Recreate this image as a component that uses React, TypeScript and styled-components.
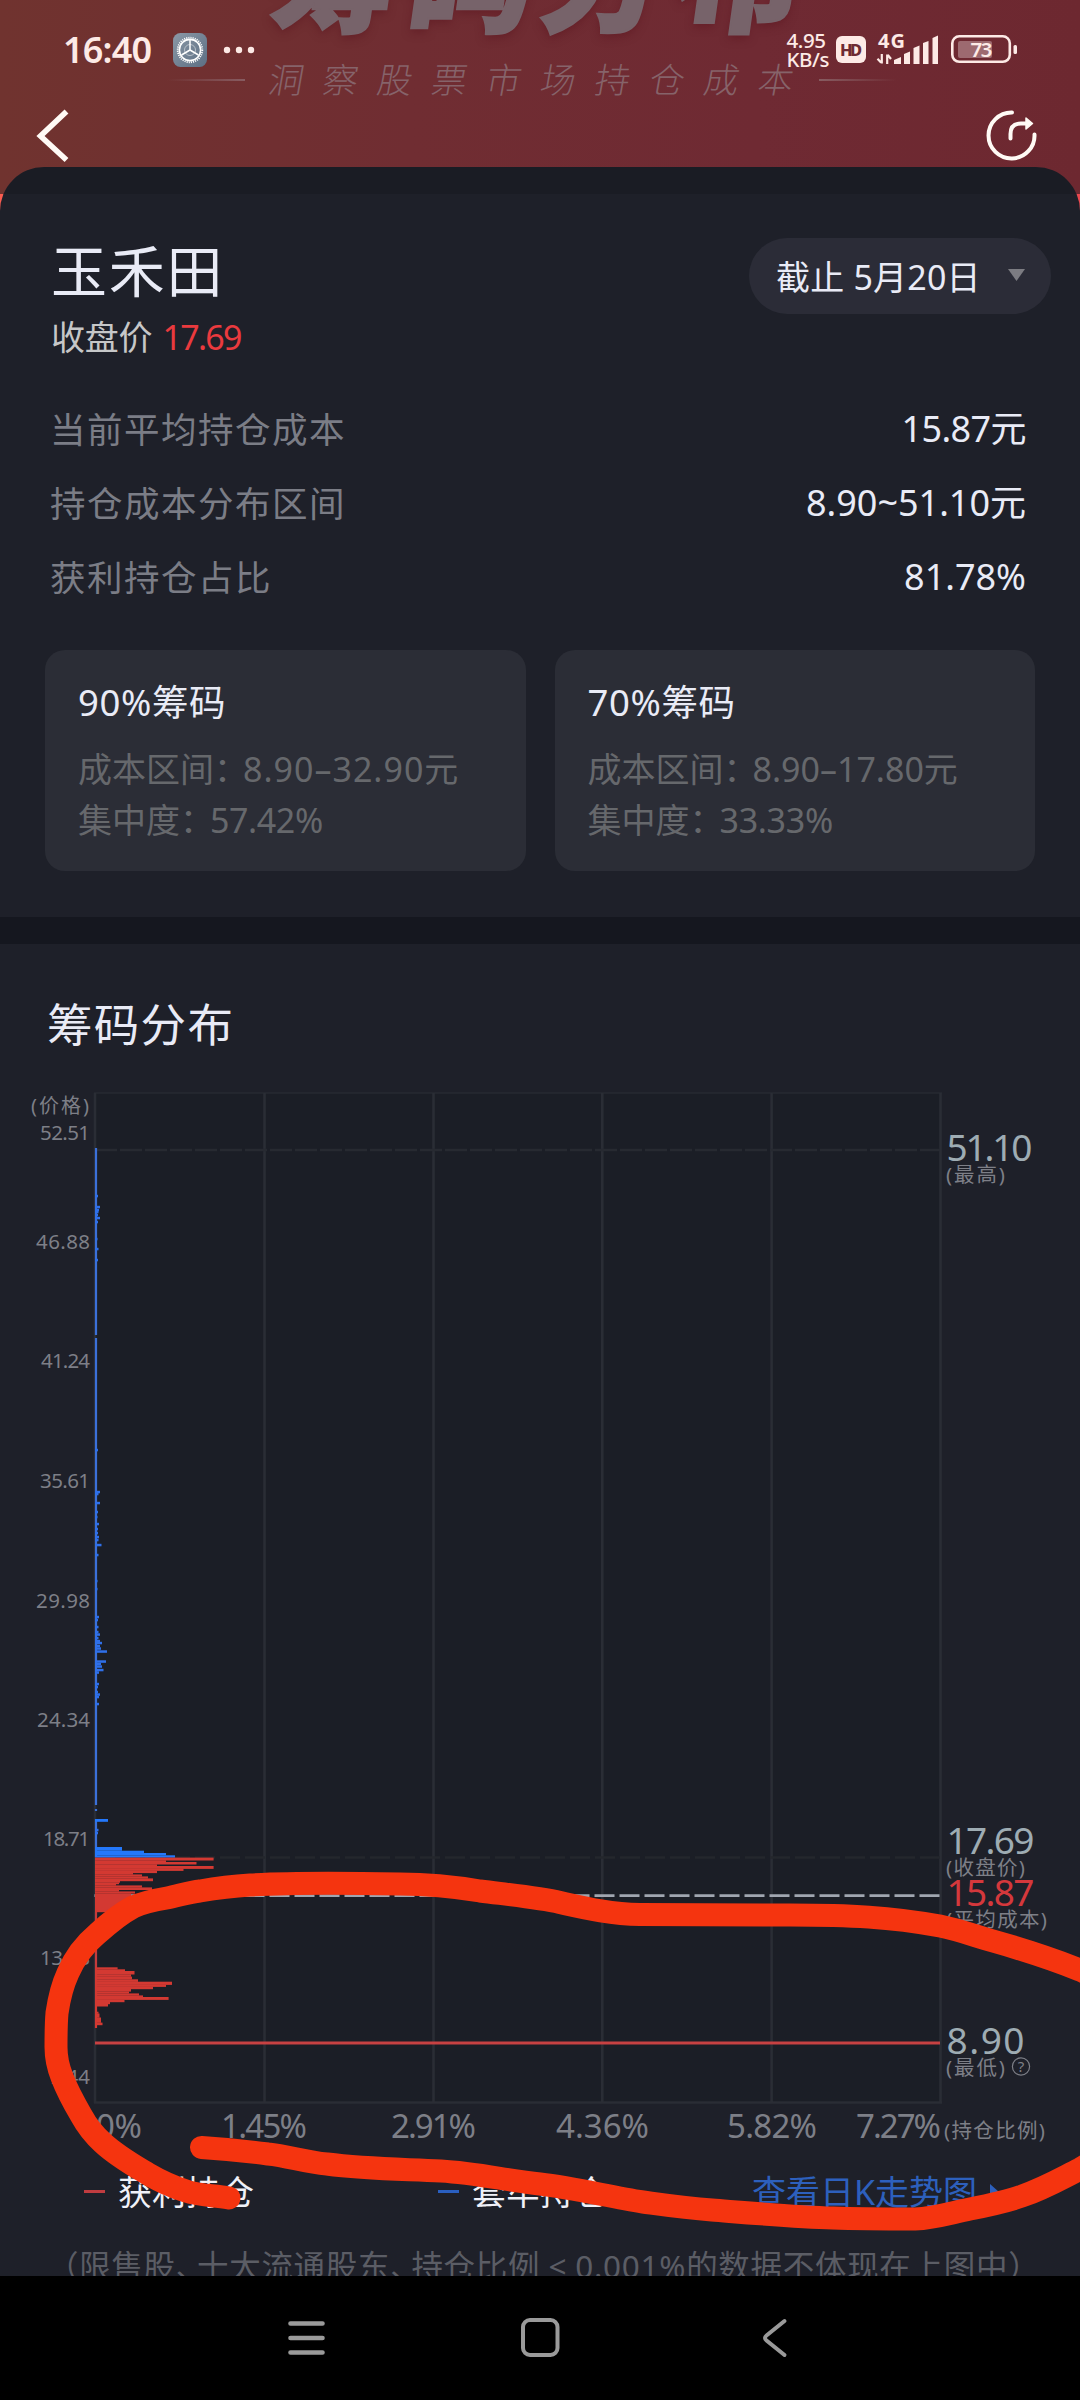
import React from "react";
import styled, { createGlobalStyle } from "styled-components";

const FONT = `"Noto Sans", "Noto Sans CJK SC", sans-serif`;

const Global = createGlobalStyle`
  * { box-sizing: border-box; }
  body { margin: 0; background: #000; font-family: ${FONT}; }
`;

const Page = styled.div`
  position: relative;
  width: 1080px;
  height: 2400px;
  overflow: hidden;
  background: #000;
`;

/* ---------- hero ---------- */
const Hero = styled.header`
  position: relative;
  height: 194px;
  overflow: hidden;
  background: linear-gradient(90deg, #70332f 0%, #702d32 38%, #6f2a33 70%, #6d2830 100%);
`;
const BannerTitle = styled.div`
  height: 46px;
  padding-right: 14px;
  display: flex;
  justify-content: center;
  align-items: flex-end;
  font-size: 132px;
  font-weight: 900;
  line-height: 150px;
  letter-spacing: 2px;
  color: #77636a;
  -webkit-text-stroke: 2px #77636a;
  text-shadow: 0 4px 8px rgba(90, 20, 30, 0.5);
  transform: skewX(-8deg);
`;
const BannerSub = styled.div`
  height: 68px;
  padding-right: 16px;
  display: flex;
  justify-content: center;
  align-items: center;
  gap: 24px;
`;
const BannerText = styled.span`
  font-size: 35px;
  line-height: 40px;
  letter-spacing: 19.4px;
  margin-right: -19px;
  font-weight: 300;
  color: #86636a;
  transform: skewX(-10deg);
`;
const BannerRule = styled.i<{ $flip?: boolean }>`
  width: 78px;
  height: 2px;
  background: linear-gradient(${(p) => (p.$flip ? "270deg" : "90deg")}, rgba(140, 100, 105, 0), #875c61);
`;
const StatusBar = styled.div`
  position: absolute;
  inset: 0 0 auto 0;
  height: 100px;
  padding: 0 62px 0 63px;
  display: flex;
  align-items: center;
  justify-content: space-between;
  color: #fdeae6;
`;
const Cluster = styled.div`
  display: flex;
  align-items: center;
`;
const Clock = styled.span`
  font-size: 36px;
  line-height: 40px;
  font-weight: 600;
  width: 110px;
  letter-spacing: -0.8px;
`;
const Speed = styled.div`
  display: flex;
  flex-direction: column;
  font-size: 20.5px;
  line-height: 19px;
  font-weight: 500;
  letter-spacing: -0.4px;
  margin-right: 6px;
`;
const HeroNav = styled.nav`
  position: absolute;
  left: 0;
  right: 0;
  top: 104px;
  height: 64px;
  padding: 0 40px 0 32px;
  display: flex;
  align-items: center;
  justify-content: space-between;
`;

/* ---------- panel ---------- */
const Backdrop = styled.div`
  margin-top: -27px;
  position: relative;
  background: linear-gradient(90deg, #fb5c50, #ea484f) 0 27px / 100% 40px no-repeat;
`;
const Panel = styled.main`
  height: 2109px;
  overflow: hidden;
  border-radius: 44px 44px 0 0;
  background: linear-gradient(#1a1c24 0 27px, #1e2029 27px);
`;
const TopRow = styled.section`
  padding: 71px 29px 0 51px;
  display: flex;
  justify-content: space-between;
  align-items: flex-start;
`;
const StockName = styled.h1`
  margin: 0;
  height: 68px;
  line-height: 64px;
  font-size: 56px;
  letter-spacing: 1.7px;
  font-weight: 400;
  color: #e9ebf6;
`;
const PriceLine = styled.div`
  height: 62px;
  line-height: 62px;
  font-size: 34px;
  letter-spacing: -0.2px;
  color: #c6c7c8;
  display: flex;
  gap: 10px;
`;
const Price = styled.span`
  color: #ea3a3e;
  letter-spacing: -1.7px;
`;
const DatePill = styled.button`
  width: 302px;
  height: 76px;
  border: 0;
  border-radius: 38px;
  background: #2b2c37;
  color: #e9ebf6;
  font: 34px ${FONT};
  padding: 0 26px 2px 27px;
  display: flex;
  align-items: center;
  justify-content: space-between;
  white-space: nowrap;
  letter-spacing: 0.2px;
`;
const Stats = styled.dl`
  margin: 24px 0 0;
  padding: 0 54px 0 50px;
`;
const StatRow = styled.div`
  height: 74px;
  line-height: 74px;
  display: flex;
  justify-content: space-between;
  font-size: 36px;
  color: #e9ebf6;
`;
const StatLabel = styled.dt`
  font-size: 35.5px;
  letter-spacing: 1.5px;
  color: #7b7d86;
`;
const StatValue = styled.dd<{ $ls: number }>`
  margin: 0;
  letter-spacing: ${(p) => p.$ls}px;
`;
const Cards = styled.section`
  margin-top: 36px;
  padding: 0 45px;
  display: grid;
  grid-template-columns: 1fr 1fr;
  gap: 29px;
`;
const Card = styled.article`
  height: 221px;
  border-radius: 20px;
  background: #2b2d36;
  padding: 24px 0 0 33px;
`;
const CardTitle = styled.h2`
  margin: 0 0 14px;
  height: 56px;
  line-height: 56px;
  font-size: 36.5px;
  font-weight: 400;
  letter-spacing: 0.6px;
  color: #e9ebf6;
`;
const CardLine = styled.p`
  margin: 0;
  height: 51px;
  line-height: 51px;
  font-size: 34px;
  color: #66686c;
  white-space: nowrap;
  display: flex;
`;
const CardKey = styled.span<{ $w: number }>`
  width: ${(p) => p.$w}px;
`;
const CardValue = styled.span<{ $ls: number }>`
  letter-spacing: ${(p) => p.$ls}px;
`;
const Divider = styled.div`
  margin-top: 46px;
  height: 27px;
  background: #15171f;
`;
const SectionTitle = styled.h2`
  margin: 50px 0 25px;
  padding-left: 47px;
  height: 61px;
  line-height: 61px;
  font-size: 45.5px;
  font-weight: 400;
  letter-spacing: 1.3px;
  color: #e9ebf6;
`;
const ChartSvg = styled.svg`
  display: block;
  font-family: ${FONT};
`;
const Legend = styled.div`
  height: 63px;
  padding-left: 84px;
  display: grid;
  grid-template-columns: 354px 314px 1fr;
  align-items: center;
  font-size: 34px;
  line-height: 40px;
  color: #f0f1f8;
`;
const LegendItem = styled.div`
  display: flex;
  align-items: center;
  gap: 13px;
  white-space: nowrap;
`;
const Dash = styled.i<{ $c: string }>`
  width: 21px;
  height: 3px;
  background: ${(p) => p.$c};
`;
const ChartLink = styled.a`
  display: flex;
  align-items: center;
  gap: 13px;
  color: #2d60bd;
  white-space: nowrap;
`;
const Note = styled.p`
  margin: 0;
  padding-left: 47px;
  height: 88px;
  line-height: 86px;
  font-size: 31.5px;
  letter-spacing: 0.7px;
  color: #5b5d65;
  white-space: nowrap;
`;
const Tight = styled.span`
  margin-right: -11px;
`;
const LessThan = styled.span`
  display: inline-block;
  width: 35px;
  text-align: center;
`;
const SystemNav = styled.footer`
  height: 124px;
  background: #000;
  display: flex;
  justify-content: center;
`;
const Scribble = styled.svg`
  position: absolute;
  left: 0;
  top: 1800px;
  pointer-events: none;
`;

/* ---------- chart data ---------- */
const AXIS = 95;
const RIGHT = 940;
const yLabels: [string, number, number][] = [
  ["52.51", 1132, 50], ["46.88", 1241, 54], ["41.24", 1360, 49], ["35.61", 1480, 50], ["29.98", 1600, 54],
  ["24.34", 1719, 53], ["18.71", 1838, 47], ["13.08", 1957, 50], ["7.44", 2076, 41],
];
const xLabels: [string, number, number][] = [
  ["0%", 97, 44], ["1.45%", 222, 84], ["2.91%", 392, 83], ["4.36%", 557, 91], ["5.82%", 728, 88], ["7.27%", 857, 83],
];
const blueTicks: [number, number][] = [
  [1196, 98], [1207, 100], [1210, 99], [1212, 98.5], [1215, 98], [1218, 100], [1222, 98], [1239, 97.5], [1249, 98.5], [1260, 98],
  [1450, 98], [1492, 100], [1494, 98.5], [1503, 100], [1512, 98], [1517, 97.5], [1524, 99], [1529, 98], [1533, 98],
  [1537, 99], [1540, 98.5], [1545, 101.5], [1555, 98.5], [1581, 97.5], [1589, 97.5], [1617, 99], [1620, 98], [1627, 98.5],
  [1632, 98.5], [1634.5, 100], [1638, 98.5], [1641, 100], [1643, 102], [1646, 100], [1648.5, 101], [1651.5, 107],
  [1661.5, 106], [1664, 101], [1666.5, 102], [1670, 103.5], [1672.5, 99], [1684, 99], [1687, 98], [1692, 98],
  [1694.5, 100], [1697, 99], [1704, 99], [1830, 98.5], [1833, 98],
];
const blueBars: [number, number, number][] = [
  [1819, 1821.8, 108], [1847, 1850.7, 122], [1850.7, 1853, 144], [1853, 1855.3, 166], [1855.3, 1857.6, 175],
];
const redBars: [number, number, number][] = [
  [1857.6, 1860.3, 213.6], [1860.3, 1862, 166], [1862, 1864.3, 196.5], [1864.3, 1866, 157], [1866, 1868.7, 213.6],
  [1868.7, 1870.7, 183.5], [1870.7, 1872.9, 157], [1872.9, 1874.4, 133], [1874.4, 1876.4, 142], [1876.4, 1878.4, 148],
  [1878.4, 1881, 153], [1881, 1882.5, 120], [1882.5, 1884, 119], [1884, 1885.4, 116], [1885.4, 1887.4, 142],
  [1887.4, 1889.8, 152], [1889.8, 1891.4, 119], [1891.4, 1893.4, 135], [1893.4, 1905, 131], [1905, 1912, 120],
  [1967.3, 1969.3, 117.6], [1969.3, 1971, 125], [1971, 1974.3, 134.5], [1974.3, 1976.6, 131], [1976.6, 1979.3, 132],
  [1979.3, 1981.7, 138], [1981.7, 1984.7, 172], [1984.7, 1986.7, 166], [1986.7, 1989, 153], [1989, 1991.4, 131],
  [1991.4, 1993.4, 129], [1993.4, 1995.4, 139], [1995.4, 1997, 143], [1997, 1999.7, 168.6], [1999.7, 2002, 124.5],
  [2002, 2004, 110], [2004, 2006.3, 108], [2006.3, 2011.7, 97], [2011.7, 2013.5, 98.5], [2013.5, 2017.5, 99.5],
  [2017.5, 2022.6, 101], [2022.6, 2025, 102.5], [2025, 2027.7, 97],
];
const marks: { v: string; tag: string; y: number; ty: number; w: number; tw: number; c?: string }[] = [
  { v: "51.10", tag: "(最高)", y: 1161, ty: 1182, w: 84, tw: 56 },
  { v: "17.69", tag: "(收盘价)", y: 1854, ty: 1875, w: 86, tw: 76 },
  { v: "15.87", tag: "(平均成本)", y: 1906, ty: 1927, w: 86, tw: 98, c: "#d5383c" },
  { v: "8.90", tag: "(最低)", y: 2054, ty: 2075, w: 76, tw: 56 },
];

function Chart() {
  return (
    <ChartSvg width="1080" height="1080" viewBox="0 1080 1080 1080">
      <rect x={AXIS} y="1093" width={RIGHT - AXIS} height="1010" fill="#1b1e26" />
      <path d="M94 1093H942" stroke="#272a32" strokeWidth="1.5" />
      <path d="M95 1093V2103M264.5 1093V2103M433.5 1093V2103M602.3 1093V2103M771.6 1093V2103M940.5 1093V2103M94 2102.5H942" stroke="#2a2d35" strokeWidth="2.6" fill="none" />
      <path d={`M${AXIS} 1150H${RIGHT}`} stroke="#272a31" strokeWidth="2.4" strokeDasharray="22 3" />
      <path d={`M${AXIS} 1857.5H${RIGHT}`} stroke="#24272d" strokeWidth="2.4" strokeDasharray="20 5" />
      <path d={`M94.5 1895.7H${RIGHT}`} stroke="#a0a6b0" strokeWidth="2.8" strokeDasharray="20 5" />
      <path d="M96 1148V1335M96 1338V1805M96 1809V1811M96 1819V1857" stroke="#3b70d9" strokeWidth="2.2" />
      {blueTicks.map(([y, x]) => (
        <rect key={y} x={AXIS} y={y - 1.2} width={x - AXIS} height="2.5" fill="#2f70ea" />
      ))}
      {blueBars.map(([a, b, x]) => (
        <rect key={a} x={AXIS} y={a} width={x - AXIS} height={b - a} fill="#2478fb" />
      ))}
      <path d="M96 1912V2028" stroke="#c53b3c" strokeWidth="2.2" />
      {redBars.map(([a, b, x]) => (
        <rect key={a} x={AXIS} y={a} width={x - AXIS} height={b - a + 0.2} fill="#d33932" />
      ))}
      <path d={`M${AXIS} 2043H${RIGHT}`} stroke="#c74142" strokeWidth="3.2" />
      <g fill="#7d7f87">
        <text x="31" y="1113" fontSize="20" textLength="58">(价格)</text>
        {yLabels.map(([t, y, w]) => (
          <text key={t} x={90 - w} y={y + 7.5} fontSize="20.5" textLength={w}>{t}</text>
        ))}
        {xLabels.map(([t, x, w]) => (
          <text key={t} x={x - 1} y="2137.5" fontSize="33" textLength={w + 2}>{t}</text>
        ))}
        <text x="944" y="2137.5" fontSize="20.5" textLength="101">(持仓比例)</text>
        {marks.map((m) => (
          <React.Fragment key={m.v}>
            <text x="946.5" y={m.y} fontSize="37" fill={m.c ?? "#9eacb3"} textLength={m.w + 2}>{m.v}</text>
            <text x="946" y={m.ty} fontSize="20.5" textLength={m.tw + 3}>{m.tag}</text>
          </React.Fragment>
        ))}
        <circle cx="1021" cy="2066.5" r="8.6" fill="none" stroke="#7d7f87" strokeWidth="1.2" />
        <text x="1021" y="2072" fontSize="15" textAnchor="middle">?</text>
      </g>
    </ChartSvg>
  );
}

const Gear = () => (
  <svg width="34" height="34" viewBox="0 0 34 34">
    <defs>
      <linearGradient id="gear" x1="0" y1="0" x2="1" y2="1">
        <stop offset="0" stopColor="#8b98a6" />
        <stop offset="1" stopColor="#5c6f84" />
      </linearGradient>
    </defs>
    <rect width="34" height="34" rx="7.5" fill="url(#gear)" />
    <circle cx="17" cy="17" r="12.3" fill="none" stroke="#fff" strokeWidth="1.8" strokeDasharray="1.1 1.05" />
    <circle cx="17" cy="17" r="10.6" fill="none" stroke="#fff" strokeWidth="1.6" />
    <circle cx="17" cy="17" r="5.5" fill="none" stroke="#b9c1ca" strokeWidth="1" />
    <path d="M17 17V7M17 17L8.5 22M17 17L25.5 22" stroke="#fff" strokeWidth="1.5" />
  </svg>
);

const StatusIcons = () => (
  <svg width="183" height="36" viewBox="836 32 183 36" fontFamily={FONT}>
    <rect x="837" y="36" width="30" height="27" rx="6" fill="#fdeae6" />
    <text x="852" y="55.5" fontSize="16.5" fontWeight="800" fill="#6e2b33" textAnchor="middle" textLength="22">HD</text>
    <text x="879" y="48" fontSize="20" fontWeight="700" fill="#fdeae6" textLength="27">4G</text>
    <path d="M882.8 54V63.5M878.5 58.8L882 62.5M888.2 64V54.5M888.8 55L892 59" stroke="#fdeae6" strokeWidth="2.2" fill="none" />
    <path d="M895 60l7-3v7h-7zM905 54l6-2.5V64h-6zM914.5 48l6-2.5V64h-6zM924 43l5.5-2V64h-5.500zM933.5 38l5.500-2.500V64h-5.500z" fill="#fdeae6" />
    <rect x="953.3" y="36.3" width="57.5" height="25.5" rx="7" fill="none" stroke="#fdeae6" strokeWidth="2.6" />
    <rect x="959" y="41" width="34" height="17" rx="2" fill="#9d6a70" />
    <rect x="1014.5" y="45" width="3.5" height="9" rx="1.5" fill="#fdeae6" />
    <text x="982.5" y="56.500" fontSize="20.500" fontWeight="600" fill="#fdeae6" textAnchor="middle" textLength="22">73</text>
  </svg>
);

const loop =
  "M229 2198 C214 2195 200 2196 186 2191 C173 2187 160 2181 148 2174 C133 2165 117 2156 103 2143 C94 2135 87 2126 81 2115 " +
  "C74 2103 67 2090 62 2077 C58 2067 56 2057 56 2047 C56 2036 56 2025 57 2013 C59 1999 62 1986 68 1973 C75 1957 85 1944 97 1934 " +
  "C108 1924 120 1914 133 1907 C144 1902 155 1900 167 1898 C178 1896 189 1892 200 1891 C217 1888 233 1886 250 1885 " +
  "C300 1882 350 1883 400 1884 C430 1884 450 1886 480 1891 C520 1896 540 1898 560 1902.500 C585 1908 610 1914 640 1914.500 " +
  "C690 1914.500 740 1914.500 790 1915 " +
  "C850 1915 890 1917 940 1926 C960 1930 975 1936 993 1941 C1025 1950 1050 1958 1080 1970 C1160 2005 1190 2105 1080 2169 " +
  "C1060 2179 1045 2188 1022 2196 C1005 2202 990 2205 970 2209 C950 2213 935 2218 915 2219 C888 2219 860 2219 833 2218 " +
  "C795 2217 750 2213 712 2210 C685 2208 665 2205 643 2202 C610 2197 575 2188 540 2184 C505 2180 475 2173 441 2171 " +
  "C400 2169 365 2169 327 2164 C305 2162 288 2156 268 2154 C245 2151 225 2149 201.500 2147.500";

export default function App() {
  return (
    <Page>
      <Global />
      <Hero>
        <BannerTitle>筹码分布</BannerTitle>
        <BannerSub>
          <BannerRule />
          <BannerText>洞察股票市场持仓成本</BannerText>
          <BannerRule $flip />
        </BannerSub>
        <StatusBar>
          <Cluster>
            <Clock>16:40</Clock>
            <Gear />
            <svg width="50" height="8" viewBox="0 0 50 8" fill="#fdeae6">
              <circle cx="20" cy="4" r="3.2" />
              <circle cx="32" cy="4" r="3.2" />
              <circle cx="44" cy="4" r="3.2" />
            </svg>
          </Cluster>
          <Cluster>
            <Speed>
              <span>4.95</span>
              <span>KB/s</span>
            </Speed>
            <StatusIcons />
          </Cluster>
        </StatusBar>
        <HeroNav>
          <svg width="44" height="60" viewBox="32 106 44 60">
            <path d="M66.5 111.5L40.5 136L66.5 160" fill="none" stroke="#fffaf5" strokeWidth="5.6" />
          </svg>
          <svg width="56" height="56" viewBox="984 108 56 56">
            <path d="M1034.5 134.5A23 23 0 1 1 1012 112.5" fill="none" stroke="#fffaf5" strokeWidth="4" strokeLinecap="round" />
            <path d="M1010.5 138.5V134Q1010.5 123.5 1021 123.5H1026" fill="none" stroke="#fffaf5" strokeWidth="4" strokeLinecap="round" />
            <path d="M1026 118L1032.5 123.5L1026 129Z" fill="#fffaf5" stroke="#fffaf5" strokeWidth="1.5" strokeLinejoin="round" />
          </svg>
        </HeroNav>
      </Hero>

      <Backdrop>
        <Panel>
          <TopRow>
            <div>
              <StockName>玉禾田</StockName>
              <PriceLine>
                收盘价<Price>17.69</Price>
              </PriceLine>
            </div>
            <DatePill>
              截止 5月20日
              <svg width="17" height="12" viewBox="0 0 17 12">
                <path d="M0 0H17L8.5 12Z" fill="#7c7c82" />
              </svg>
            </DatePill>
          </TopRow>
          <Stats>
            <StatRow>
              <StatLabel>当前平均持仓成本</StatLabel>
              <StatValue $ls={-0.6}>15.87元</StatValue>
            </StatRow>
            <StatRow>
              <StatLabel>持仓成本分布区间</StatLabel>
              <StatValue $ls={0}>8.90~51.10元</StatValue>
            </StatRow>
            <StatRow>
              <StatLabel>获利持仓占比</StatLabel>
              <StatValue $ls={0}>81.78%</StatValue>
            </StatRow>
          </Stats>
          <Cards>
            <Card>
              <CardTitle>90%筹码</CardTitle>
              <CardLine>
                <CardKey $w={165}>成本区间：</CardKey>
                <CardValue $ls={1}>8.90–32.90元</CardValue>
              </CardLine>
              <CardLine>
                <CardKey $w={132}>集中度：</CardKey>
                <CardValue $ls={-0.4}>57.42%</CardValue>
              </CardLine>
            </Card>
            <Card>
              <CardTitle>70%筹码</CardTitle>
              <CardLine>
                <CardKey $w={165}>成本区间：</CardKey>
                <CardValue $ls={0}>8.90–17.80元</CardValue>
              </CardLine>
              <CardLine>
                <CardKey $w={132}>集中度：</CardKey>
                <CardValue $ls={-0.3}>33.33%</CardValue>
              </CardLine>
            </Card>
          </Cards>
          <Divider />
          <SectionTitle>筹码分布</SectionTitle>
          <Chart />
          <Legend>
            <LegendItem>
              <Dash $c="#c03c40" />
              获利持仓
            </LegendItem>
            <LegendItem>
              <Dash $c="#2a5fc0" />
              套牢持仓
            </LegendItem>
            <ChartLink>
              查看日K走势图
              <svg width="9" height="16" viewBox="0 0 9 16">
                <path d="M0 0L9 8L0 16Z" fill="#2d60bd" />
              </svg>
            </ChartLink>
          </Legend>
          <Note>
            （限售股<Tight>、</Tight>十大流通股东<Tight>、</Tight>持仓比例<LessThan>&lt;</LessThan>0.001%的数据不体现在上图中）
          </Note>
        </Panel>
      </Backdrop>

      <SystemNav>
        <svg width="540" height="124" viewBox="270 2276 540 124" fill="none" stroke="#9a9a9a" strokeWidth="4.6" strokeLinecap="round" strokeLinejoin="round">
          <path d="M290.5 2323.5H322.5M290.5 2338H322.5M290.5 2352.5H322.5" />
          <rect x="523" y="2320" width="34.5" height="35" rx="7" strokeWidth="4" />
          <path d="M784.5 2321L766.5 2335.5Q763.5 2338 766.5 2340.5L784.5 2355" strokeWidth="4" />
        </svg>
      </SystemNav>

      <Scribble width="1080" height="500" viewBox="0 1800 1080 500">
        <path d={loop} fill="none" stroke="#f5340f" strokeWidth="23" strokeLinecap="round" strokeLinejoin="round" />
      </Scribble>
    </Page>
  );
}
